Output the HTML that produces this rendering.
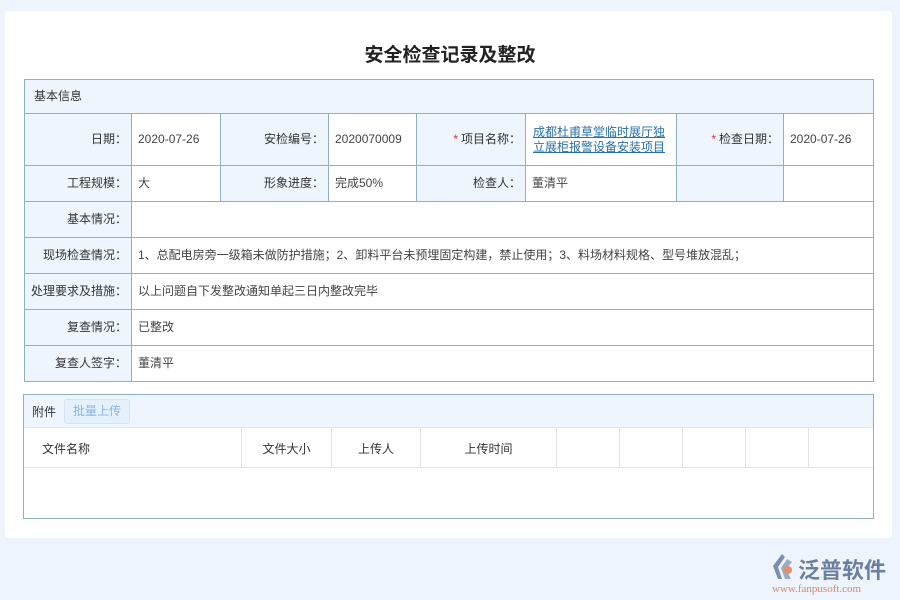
<!DOCTYPE html>
<html><head><meta charset="utf-8"><style>
*{margin:0;padding:0;box-sizing:border-box}
body{width:900px;height:600px;background:#eef4fc;font-family:"Liberation Sans","Noto Sans CJK SC",sans-serif;font-size:12px;color:#333;position:relative;overflow:hidden}
.card{position:absolute;left:5px;top:11px;width:887px;height:527px;background:#fff;border-radius:3px}
h1{position:absolute;left:0;top:40px;width:900px;text-align:center;font-size:19px;font-weight:bold;color:#222}
.abs{position:absolute}
.cell{position:absolute;border:1px solid #8fb0c0;display:flex;align-items:center;padding:0 6px;line-height:15px}
.lab{background:#eef5fd;justify-content:flex-end;color:#333;white-space:nowrap;padding:0 4px 0 2px}
.val{background:#fff;color:#444}
.star{color:#e03030;margin-right:3px}
a{color:#2a6fa8;text-decoration:underline}
.th{position:absolute;top:428px;height:40px;border-right:1px solid #e4e4e4;display:flex;align-items:center;justify-content:center;color:#333}
</style></head><body>
<div class="card"></div>
<h1>安全检查记录及整改</h1>
<div class="cell lab" style="left:24px;top:79px;width:850px;height:35px;justify-content:flex-start;padding-left:9px">基本信息</div>

<div class="cell lab" style="left:24px;top:113px;width:108px;height:53px">日期：</div>
<div class="cell val" style="left:131px;top:113px;width:90px;height:53px">2020-07-26</div>
<div class="cell lab" style="left:220px;top:113px;width:109px;height:53px">安检编号：</div>
<div class="cell val" style="left:328px;top:113px;width:89px;height:53px">2020070009</div>
<div class="cell lab" style="left:416px;top:113px;width:110px;height:53px"><span class="star">*</span>项目名称：</div>
<div class="cell val" style="left:525px;top:113px;width:152px;height:53px;padding-left:7px"><a>成都杜甫草堂临时展厅独立展柜报警设备安装项目</a></div>
<div class="cell lab" style="left:676px;top:113px;width:108px;height:53px"><span class="star">*</span>检查日期：</div>
<div class="cell val" style="left:783px;top:113px;width:91px;height:53px">2020-07-26</div>

<div class="cell lab" style="left:24px;top:165px;width:108px;height:37px">工程规模：</div>
<div class="cell val" style="left:131px;top:165px;width:90px;height:37px">大</div>
<div class="cell lab" style="left:220px;top:165px;width:109px;height:37px">形象进度：</div>
<div class="cell val" style="left:328px;top:165px;width:89px;height:37px">完成50%</div>
<div class="cell lab" style="left:416px;top:165px;width:110px;height:37px">检查人：</div>
<div class="cell val" style="left:525px;top:165px;width:152px;height:37px">董清平</div>
<div class="cell lab" style="left:676px;top:165px;width:108px;height:37px"></div>
<div class="cell val" style="left:783px;top:165px;width:91px;height:37px"></div>

<div class="cell lab" style="left:24px;top:201px;width:108px;height:37px">基本情况：</div>
<div class="cell val" style="left:131px;top:201px;width:743px;height:37px"></div>
<div class="cell lab" style="left:24px;top:237px;width:108px;height:37px">现场检查情况：</div>
<div class="cell val" style="left:131px;top:237px;width:743px;height:37px">1、总配电房旁一级箱未做防护措施；2、卸料平台未预埋固定构建，禁止使用；3、料场材料规格、型号堆放混乱；</div>
<div class="cell lab" style="left:24px;top:273px;width:108px;height:37px">处理要求及措施：</div>
<div class="cell val" style="left:131px;top:273px;width:743px;height:37px">以上问题自下发整改通知单起三日内整改完毕</div>
<div class="cell lab" style="left:24px;top:309px;width:108px;height:37px">复查情况：</div>
<div class="cell val" style="left:131px;top:309px;width:743px;height:37px">已整改</div>
<div class="cell lab" style="left:24px;top:345px;width:108px;height:37px">复查人签字：</div>
<div class="cell val" style="left:131px;top:345px;width:743px;height:37px">董清平</div>

<div class="abs" style="left:23px;top:394px;width:851px;height:125px;border:1px solid #8fb0c0;background:#fff"></div>
<div class="abs" style="left:24px;top:395px;width:849px;height:33px;background:#eef5fd;border-bottom:1px solid #e0e6ee"></div>
<div class="abs" style="left:32px;top:403px;color:#333">附件</div>
<div class="abs" style="left:64px;top:399px;width:66px;height:25px;border:1px solid #d4e6f6;background:#e4f0fc;border-radius:3px;color:#8ab8e0;text-align:center;line-height:23px">批量上传</div>
<div class="th" style="left:24px;width:218px;justify-content:flex-start;padding-left:18px">文件名称</div>
<div class="th" style="left:242px;width:90px">文件大小</div>
<div class="th" style="left:332px;width:89px">上传人</div>
<div class="th" style="left:421px;width:136px">上传时间</div>
<div class="th" style="left:557px;width:63px"></div>
<div class="th" style="left:620px;width:63px"></div>
<div class="th" style="left:683px;width:63px"></div>
<div class="th" style="left:746px;width:63px"></div>
<div class="abs" style="left:24px;top:467px;width:849px;height:1px;background:#e4e4e4"></div>

<svg class="abs" style="left:770px;top:552px" width="28" height="30" viewBox="0 0 28 30"><path d="M12 2 L3 14 L8 27 L12 27 L8 15 L15 5Z" fill="#7d8fae"/><path d="M17 7 L11 16 L15 27 L21 27 L16 17 L22 10Z" fill="#9aaac4"/><circle cx="18" cy="18" r="4" fill="#e0906a"/></svg>
<div class="abs" style="left:798px;top:553px;font-size:22px;color:#6d7fa0;font-weight:bold;letter-spacing:0px">泛普软件</div>
<div class="abs" style="left:772px;top:583px;font-size:11px;color:#d08a70;font-family:'Liberation Serif',serif">www.fanpusoft.com</div>
</body></html>
